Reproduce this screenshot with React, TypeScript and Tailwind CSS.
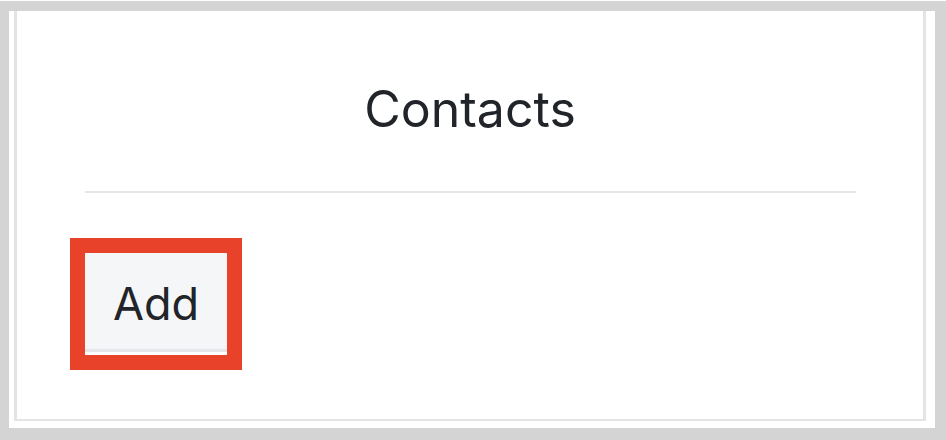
export default function App() {
  return (
    <div
      className="w-[946px] h-[440px] bg-white pt-px"
      style={{ fontFamily: 'Inter, "Noto Sans", sans-serif' }}
    >
      <div className="h-[439px] bg-[#d4d4d4] pt-[10px] pl-[9px] pr-[11px] pb-[12px]">
        <div className="h-full bg-white pl-[5px] pr-[9px] pb-[7px]">
          <div className="h-full border-x-[3px] border-b-[2px] border-[#e4e4e4] flex flex-col">
            <h1 className="pt-[73px] text-center text-[50px] leading-[50px] text-[#21252a] font-normal">
              Contacts
            </h1>
            <div className="mt-[57px] ml-[68px] mr-[67px] h-[2px] bg-[#e6e6e6]" />
            <div className="mt-[45px] ml-[53px] w-[172px] h-[132px] border-[15px] border-[#e8432a] bg-white">
              <div className="h-[99px] bg-[#f5f6f8] border-b-[3px] border-[#e5e6e9] flex justify-center pt-[27px] text-[45px] leading-[48px] text-[#21252a]">
                Add
              </div>
            </div>
          </div>
        </div>
      </div>
    </div>
  );
}
